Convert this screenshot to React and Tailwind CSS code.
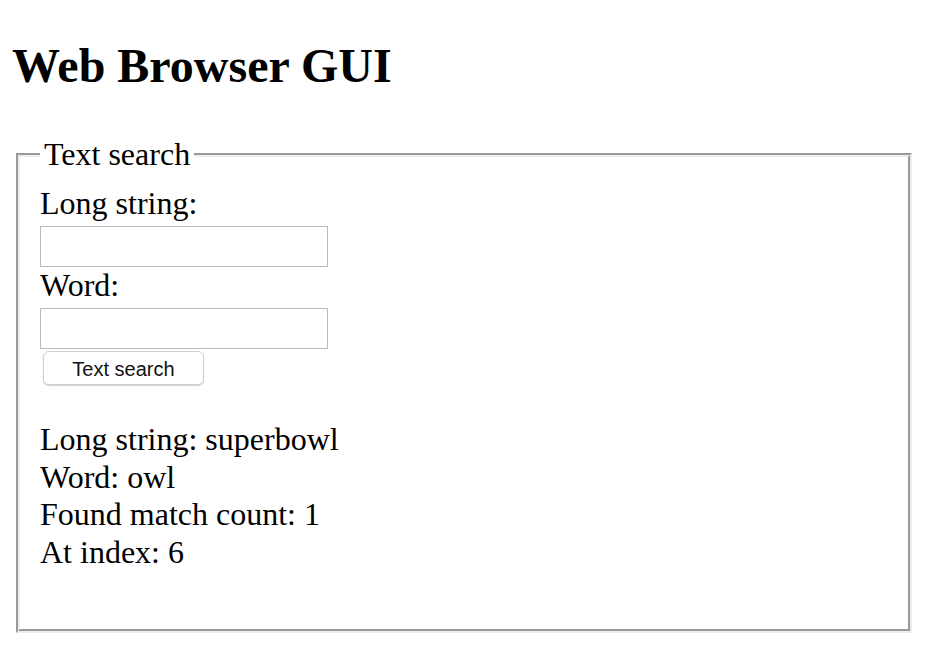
export default function App() {
  return (
    <div className="min-h-[652px] bg-white px-[16px] pt-[38px] text-black" style={{ fontFamily: '"Liberation Serif", "Times New Roman", serif' }}>
      <h2 className="m-0 -ml-[4px] text-[48px] font-bold leading-[55px]">Web Browser GUI</h2>
      <fieldset className="mt-[41px] w-[896px] border-[4px] border-[#ededed] pl-[20px] pr-[20px] pt-[9px] pb-[58px]" style={{ borderStyle: 'groove' }}>
        <legend className="px-[4px] pt-[2px] pb-[3px] text-[32px] leading-[37px]">Text search</legend>
        <div className="flex flex-col items-start text-[32px]">
          <label className="leading-[36px]">Long string:</label>
          <input type="text" className="mt-[5px] h-[41px] w-[288px] border border-[#bcbcbc] bg-white outline-none" />
          <label className="leading-[36px]">Word:</label>
          <input type="text" className="mt-[5px] h-[41px] w-[288px] border border-[#bcbcbc] bg-white outline-none" />
          <button
            type="button"
            className="ml-[3px] mt-[2px] flex h-[34px] w-[161px] items-center justify-center rounded-[6px] border border-[#cfcfcf] bg-white pt-[2px] text-[20px] leading-none text-[#111] shadow-[0_1px_1px_rgba(0,0,0,0.18)]"
            style={{ fontFamily: '"Liberation Sans", Arial, sans-serif' }}
          >
            Text search
          </button>
          <div className="mt-[36px] leading-[37.6px]">
            <div>Long string: superbowl</div>
            <div>Word: owl</div>
            <div>Found match count: 1</div>
            <div>At index: 6</div>
          </div>
        </div>
      </fieldset>
    </div>
  );
}
